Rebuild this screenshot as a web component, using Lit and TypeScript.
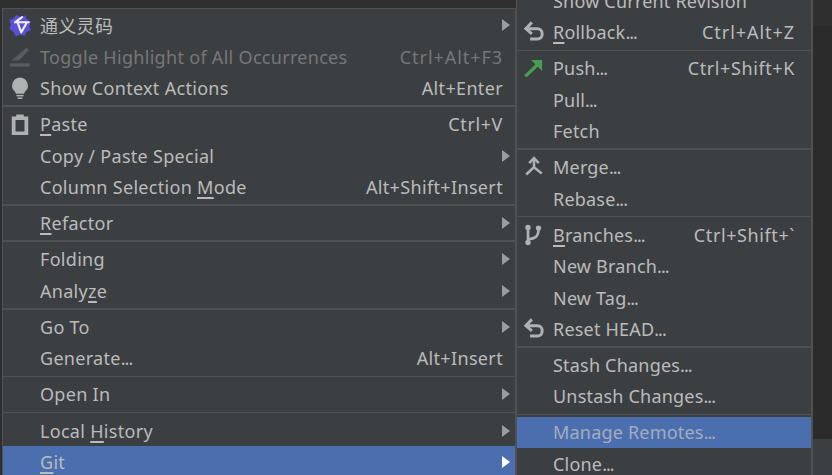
import { LitElement, html, css, svg, nothing } from "lit";
import { customElement } from "lit/decorators.js";

type Item = { t?: any; k?: string; kc?: string; i?: string; sub?: boolean; dis?: boolean; sel?: boolean; sep?: boolean };

const icons: Record<string, any> = {
  logo: svg`<path d="M5.6 1.4 8.4 2.6l3-1 1.2 2.6 2.6 1.6-1 2.8 1 2.8-2.8 1.2-1.4 2.6-3-.9-2.8 1.3-1.3-2.7L1 10.6l1-2.9-1.2-2.8 2.8-1.2z" fill="#5b50dc"/><path d="M9.4 2.8 4.6 6.2h9.2M6.4 6.2l2.4 6.8 3.4-6" fill="none" stroke="#f4f2ff" stroke-width="1.4" stroke-linejoin="round" stroke-linecap="round"/>`,
  toggle: svg`<path d="M2.4 10.4 12.4 1.6l1.6 1.8-6.6 7z" fill="#5a5c5e"/><rect x="1.4" y="12.2" width="13" height="2.2" fill="#5a5c5e"/>`,
  bulb: svg`<path d="M8 1a5.4 5.4 0 0 0-3.2 9.6l.5 1.2h5.4l.5-1.2A5.4 5.4 0 0 0 8 1z" fill="#afb1b3"/><rect x="5.6" y="12.6" width="4.8" height="1" fill="#afb1b3"/><rect x="6.4" y="14.3" width="3.2" height="1" fill="#afb1b3"/>`,
  paste: svg`<path fill-rule="evenodd" d="M2.5 3H5.5V1.6h5V3h3v12.4h-11zM5 5.4v7.6h6V5.4z" fill="#afb1b3"/>`,
  undo: svg`<path d="M3.6 5.8h6.8a3 3 0 0 1 3 3v.8a3 3 0 0 1-3 3H5.4" fill="none" stroke="#afb1b3" stroke-width="2"/><path d="M6.6 1.6 2.6 5.8l4 3.4" fill="none" stroke="#afb1b3" stroke-width="2"/>`,
  push: svg`<path d="M2.2 13.6 11 5.2" fill="none" stroke="#499c54" stroke-width="2.2"/><path d="M6 2.6h7.4V10z" fill="#499c54"/>`,
  merge: svg`<path d="M8 2.6v5.6L2.8 13M8 8.2l5.2 4.2" fill="none" stroke="#afb1b3" stroke-width="1.7"/><path d="M4.8 5.4 8 2l3.2 3.4" fill="none" stroke="#afb1b3" stroke-width="1.7"/>`,
  branch: svg`<path d="M4 3v10M4 10.6c5 0 7-1.6 7-6.8" fill="none" stroke="#afb1b3" stroke-width="1.8"/><circle cx="4" cy="3" r="1.8" fill="#afb1b3"/><circle cx="4" cy="13" r="1.8" fill="#afb1b3"/><circle cx="11" cy="3.4" r="1.8" fill="#afb1b3"/>`,
};

const d = html`<span class="dots">...</span>`;
const u = (a: string, b: string, c: any) => html`${a}<u>${b}</u>${c}`;

const left: Item[] = [
  { t: "通义灵码", i: "logo", sub: true },
  { t: "Toggle Highlight of All Occurrences", k: "Ctrl+Alt+F3", kc: "wide", i: "toggle", dis: true },
  { t: "Show Context Actions", k: "Alt+Enter", kc: "tight", i: "bulb" },
  { sep: true },
  { t: u("", "P", "aste"), k: "Ctrl+V", i: "paste" },
  { t: "Copy / Paste Special", sub: true },
  { t: u("Column Selection ", "M", "ode"), k: "Alt+Shift+Insert", kc: "tight" },
  { sep: true },
  { t: u("", "R", "efactor"), sub: true },
  { sep: true },
  { t: "Folding", sub: true },
  { t: u("Analy", "z", "e"), sub: true },
  { sep: true },
  { t: "Go To", sub: true },
  { t: html`Generate${d}`, k: "Alt+Insert", kc: "tight" },
  { sep: true },
  { t: "Open In", sub: true },
  { sep: true },
  { t: u("Local ", "H", "istory"), sub: true },
  { t: u("", "G", "it"), sub: true, sel: true },
];

const right: Item[] = [
  { t: "Show Current Revision" },
  { t: u("", "R", html`ollback${d}`), k: "Ctrl+Alt+Z", kc: "wide", i: "undo" },
  { sep: true },
  { t: html`Push${d}`, k: "Ctrl+Shift+K", i: "push" },
  { t: html`Pull${d}` },
  { t: "Fetch" },
  { sep: true },
  { t: html`Merge${d}`, i: "merge" },
  { t: html`Rebase${d}` },
  { sep: true },
  { t: u("", "B", html`ranches${d}`), k: "Ctrl+Shift+`", i: "branch" },
  { t: html`New Branch${d}` },
  { t: html`New Tag${d}` },
  { t: html`Reset HEAD${d}`, i: "undo" },
  { sep: true },
  { t: html`Stash Changes${d}` },
  { t: html`Unstash Changes${d}` },
  { sep: true },
  { t: html`Manage Remotes${d}`, sel: true, dis: true },
  { t: html`Clone${d}` },
];

@customElement("app-root")
export class AppRoot extends LitElement {
  static styles = css`
    :host {
      display: block;
      width: 832px;
      height: 475px;
      overflow: hidden;
      font-family: "Noto Sans", "Noto Sans CJK SC", sans-serif;
      font-size: 18px;
      letter-spacing: 0.2px;
      color: #bbbbbb;
    }
    .stage {
      display: flex;
      width: 832px;
      height: 475px;
      overflow: hidden;
      background: #2f2f2f;
    }
    .left {
      flex: none;
      box-sizing: border-box;
      width: 514px;
      height: 520px;
      margin: 8px 0 0 2px;
      padding-top: 0.25px;
      background: #3c3f41;
      border: 1px solid #515151;
      border-width: 1px 1px 0 1px;
    }
    .right {
      flex: none;
      box-sizing: border-box;
      width: 297px;
      height: 520px;
      margin-top: -14.9px;
      background: #3c3f41;
      border-left: 1px solid #515151;
      border-right: 2px solid #515151;
    }
    .side {
      flex: 1;
      display: flex;
      flex-direction: column;
    }
    .side .a { height: 26px; background: #2f2f2f; }
    .side .b { height: 413px; background: #2b2b2b; }
    .side .c { flex: 1; background: #3c3f41; }
    .row {
      display: flex;
      align-items: center;
      height: 31.5px;
      white-space: nowrap;
    }
    .icon {
      flex: none;
      width: 24px;
      height: 24px;
      margin-left: 5px;
    }
    .noicon { flex: none; width: 29px; }
    .label { margin-left: 8px; flex: 1; }
    .left .label { letter-spacing: 0.3px; }
    .right .label { margin-left: 7px; }
    .dots { letter-spacing: -1px; }
    .key { margin-right: 12px; letter-spacing: 0.6px; }
    .key.wide { letter-spacing: 0.95px; }
    .key.tight { letter-spacing: 0.35px; }
    .right .key { margin-right: 16px; }
    .arrow {
      width: 0;
      height: 0;
      margin-right: 5px;
      border-left: 8px solid #9a9d9f;
      border-top: 6px solid transparent;
      border-bottom: 6px solid transparent;
    }
    .dis { color: #777777; }
    .sel { background: #4b6eaf; }
    .sel .arrow { border-left-color: #ffffff; }
    .sel.dis { color: #a4adbd; }
    .sep {
      display: flex;
      align-items: center;
      height: 4.4px;
    }
    .left .sep { height: 4.6px; }
    .sep i { display: block; width: 100%; height: 1.5px; background: #515151; }
    u { text-underline-offset: 3px; text-decoration-thickness: 1.5px; }
  `;

  private renderItems(items: Item[]) {
    return items.map((it) =>
      it.sep
        ? html`<div class="sep"><i></i></div>`
        : html`<div class="row ${it.dis ? "dis" : ""} ${it.sel ? "sel" : ""}">
            ${it.i
              ? html`<svg class="icon" viewBox="0 0 16 16">${icons[it.i]}</svg>`
              : html`<span class="noicon"></span>`}
            <span class="label">${it.t}</span>
            ${it.k ? html`<span class="key ${it.kc ?? ""}">${it.k}</span>` : nothing}
            ${it.sub ? html`<span class="arrow"></span>` : nothing}
          </div>`
    );
  }

  render() {
    return html`<div class="stage">
      <div class="left">${this.renderItems(left)}</div>
      <div class="right">${this.renderItems(right)}</div>
      <div class="side"><div class="a"></div><div class="b"></div><div class="c"></div></div>
    </div>`;
  }
}
